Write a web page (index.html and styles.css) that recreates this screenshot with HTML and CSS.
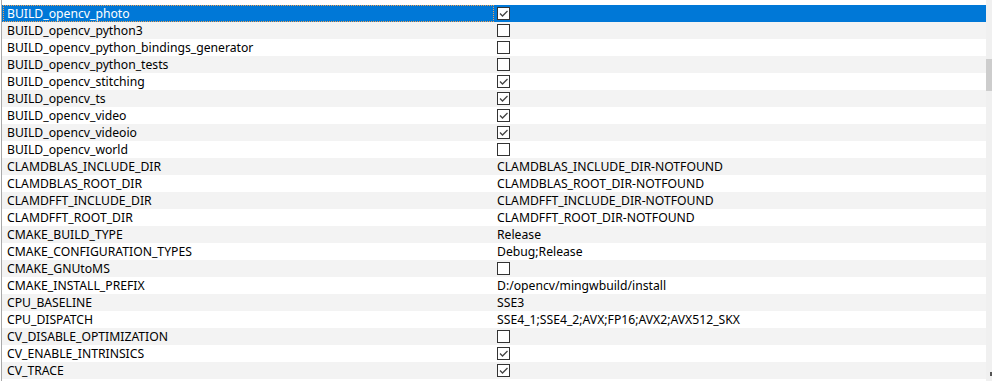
FILE: index.html
```html
<!DOCTYPE html>
<html lang="en">

<head>
  <meta charset="UTF-8">
  <title>CMake cache</title>
  <link rel="stylesheet" href="styles.css">
</head>

<body>
  <div class="view">
    <div class="cache">
      <div class="row selected"><div class="name">BUILD_opencv_photo</div><div class="value"><span class="check on"><svg viewBox="0 0 11 11"><polyline points="2,5.5 4.5,8 9.5,3"/></svg></span></div></div>
      <div class="row"><div class="name">BUILD_opencv_python3</div><div class="value"><span class="check"></span></div></div>
      <div class="row"><div class="name">BUILD_opencv_python_bindings_generator</div><div class="value"><span class="check"></span></div></div>
      <div class="row"><div class="name">BUILD_opencv_python_tests</div><div class="value"><span class="check"></span></div></div>
      <div class="row"><div class="name">BUILD_opencv_stitching</div><div class="value"><span class="check on"><svg viewBox="0 0 11 11"><polyline points="2,5.5 4.5,8 9.5,3"/></svg></span></div></div>
      <div class="row"><div class="name">BUILD_opencv_ts</div><div class="value"><span class="check on"><svg viewBox="0 0 11 11"><polyline points="2,5.5 4.5,8 9.5,3"/></svg></span></div></div>
      <div class="row"><div class="name">BUILD_opencv_video</div><div class="value"><span class="check on"><svg viewBox="0 0 11 11"><polyline points="2,5.5 4.5,8 9.5,3"/></svg></span></div></div>
      <div class="row"><div class="name">BUILD_opencv_videoio</div><div class="value"><span class="check on"><svg viewBox="0 0 11 11"><polyline points="2,5.5 4.5,8 9.5,3"/></svg></span></div></div>
      <div class="row"><div class="name">BUILD_opencv_world</div><div class="value"><span class="check"></span></div></div>
      <div class="row"><div class="name">CLAMDBLAS_INCLUDE_DIR</div><div class="value">CLAMDBLAS_INCLUDE_DIR-NOTFOUND</div></div>
      <div class="row"><div class="name">CLAMDBLAS_ROOT_DIR</div><div class="value">CLAMDBLAS_ROOT_DIR-NOTFOUND</div></div>
      <div class="row"><div class="name">CLAMDFFT_INCLUDE_DIR</div><div class="value">CLAMDFFT_INCLUDE_DIR-NOTFOUND</div></div>
      <div class="row"><div class="name">CLAMDFFT_ROOT_DIR</div><div class="value">CLAMDFFT_ROOT_DIR-NOTFOUND</div></div>
      <div class="row"><div class="name">CMAKE_BUILD_TYPE</div><div class="value">Release</div></div>
      <div class="row"><div class="name">CMAKE_CONFIGURATION_TYPES</div><div class="value">Debug;Release</div></div>
      <div class="row"><div class="name">CMAKE_GNUtoMS</div><div class="value"><span class="check"></span></div></div>
      <div class="row"><div class="name">CMAKE_INSTALL_PREFIX</div><div class="value">D:/opencv/mingwbuild/install</div></div>
      <div class="row"><div class="name">CPU_BASELINE</div><div class="value">SSE3</div></div>
      <div class="row"><div class="name">CPU_DISPATCH</div><div class="value">SSE4_1;SSE4_2;AVX;FP16;AVX2;AVX512_SKX</div></div>
      <div class="row"><div class="name">CV_DISABLE_OPTIMIZATION</div><div class="value"><span class="check"></span></div></div>
      <div class="row"><div class="name">CV_ENABLE_INTRINSICS</div><div class="value"><span class="check on"><svg viewBox="0 0 11 11"><polyline points="2,5.5 4.5,8 9.5,3"/></svg></span></div></div>
      <div class="row"><div class="name">CV_TRACE</div><div class="value"><span class="check on"><svg viewBox="0 0 11 11"><polyline points="2,5.5 4.5,8 9.5,3"/></svg></span></div></div>
    </div>
    <div class="scrollbar">
      <div class="thumb"></div>
      <span class="grip"></span>
    </div>
  </div>
</body>

</html>
```

FILE: styles.css
```css
html, body {
  margin: 0;
  background: #fff;
}

.view {
  display: flex;
  height: 381px;
  font-family: "Noto Sans", "Open Sans", sans-serif;
  font-size: 12.2px;
  color: #000;
}

.cache {
  flex: 1;
  margin-left: 1px;
  padding-top: 5px;
  border-left: 1px solid #a9a9a9;
}

.row {
  display: grid;
  grid-template-columns: 492px 1fr;
  height: 17px;
  line-height: 17px;
  white-space: nowrap;
}

.row:nth-child(even) {
  background: #f3f3f3;
}

.row.selected {
  background: #0078d7;
  color: #fff;
}

.row .name {
  padding-left: 5px;
  overflow: hidden;
}

.row.selected .name {
  outline: 1px dotted #f0a050;
  outline-offset: -1px;
  margin-left: 1px;
  padding-left: 4px;
}

.row .value {
  padding-left: 3px;
  display: flex;
  align-items: center;
}

.check {
  width: 11px;
  height: 11px;
  border: 1px solid #333;
  background: #fff;
}

.check svg {
  display: block;
  width: 11px;
  height: 11px;
  fill: none;
  stroke: #444;
  stroke-width: 1.3;
}

.scrollbar {
  position: relative;
  width: 6px;
  background: #f0f0f0;
}

.thumb {
  margin-top: 59px;
  height: 32px;
  background: #cdcdcd;
}

.grip {
  position: absolute;
  left: 4px;
  top: 372px;
  width: 2px;
  height: 4px;
  background: #555;
}
```
